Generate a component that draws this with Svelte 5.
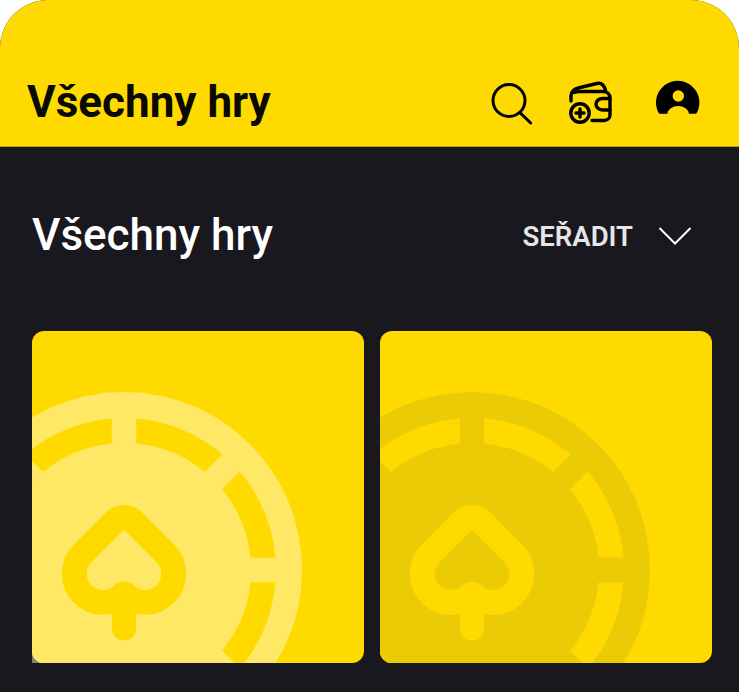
<script lang="ts">
  // the same chip artwork sits on both tiles, only the tint changes
  const tiles = [{ tint: 'light' }, { tint: 'dark' }];
  const cx = 92;
  const cy = 239;
  // gaps in the chip's ring, every 45 degrees
  const gaps = [0, 45, 90, 135];
</script>

<div class="page">
  <header class="topbar">
    <h1 class="brand-title">Všechny hry</h1>
    <div class="actions">
      <svg class="icon search" viewBox="0 0 44 48" aria-label="Hledat">
        <circle cx="20" cy="22.5" r="16" fill="none" stroke="#000" stroke-width="3" />
        <path d="M31 34.7 41.7 45" fill="none" stroke="#000" stroke-width="3" stroke-linecap="round" />
      </svg>
      <svg class="icon wallet" viewBox="0 0 44 48" aria-label="Peněženka">
        <g fill="none" stroke="#000" stroke-width="3.4" stroke-linecap="round" stroke-linejoin="round">
          <path d="M3 23V18C3 13 7 10.5 12 9.5L29 5.5C33 4.5 36 7 37.5 12" />
          <path d="M6 14.5C8 13.5 9 13.5 12 13.5H35C39 13.5 42 16 42 20V37C42 40.5 39 42.5 36 42.5H24" />
          <path d="M42 20.5H34.5C31 20.5 28 23 28 26.2S31 32 34.5 32H42" />
          <circle cx="12" cy="35" r="9.2" />
          <path d="M12 31V39M8 35H16" />
        </g>
      </svg>
      <svg class="icon avatar" viewBox="0 0 44 48" aria-label="Účet">
        <path
          fill="#000"
          fill-rule="evenodd"
          d="M3.5 35.7C3.2 35.7 3 35.5 2.8 35.2A21.7 21.7 0 1 1 40.6 35.2C40.4 35.5 40.2 35.7 40 35.7H33A10.9 8.4 0 0 0 11.3 35.7ZM22.3 12.3A5.7 5.7 0 1 0 22.3 23.7A5.7 5.7 0 1 0 22.3 12.3Z"
        />
      </svg>
    </div>
  </header>

  <section class="games">
    <div class="section-head">
      <h2>Všechny hry</h2>
      <button class="sort">
        <span>SEŘADIT</span>
        <svg viewBox="0 0 34 20" width="34" height="20">
          <path d="M1.5 2 17 17.5 32.5 2" fill="none" stroke="#fff" stroke-width="2" />
        </svg>
      </button>
    </div>

    <div class="grid">
      {#each tiles as tile}
        <div class="tile" class:corner={tile.tint === 'light'}>
          <svg class="chip {tile.tint}" viewBox="0 0 332 332">
            <circle {cx} {cy} r="178" class="tint-fill" />
            <circle {cx} {cy} r="139.5" fill="none" class="base-stroke" stroke-width="25" />
            {#each gaps as angle}
              <line
                x1={cx - 165}
                y1={cy}
                x2={cx + 165}
                y2={cy}
                class="tint-stroke"
                stroke-width="24.5"
                transform="rotate({angle} {cx} {cy})"
              />
            {/each}
            <circle {cx} {cy} r="127" class="tint-fill" />
            <path
              class="base-stroke tint-inner"
              stroke-width="25"
              stroke-linejoin="round"
              d="M82.6 190.4A13.3 13.3 0 0 1 101.4 190.4L133.3 222.4A28.7 28.7 0 0 1 92.7 263H91.3A28.7 28.7 0 0 1 50.7 222.4Z"
            />
            <path d="M92 270V297.5" fill="none" class="base-stroke" stroke-width="24" stroke-linecap="round" />
          </svg>
        </div>
      {/each}
    </div>
  </section>
</div>

<style>
  :global(body) {
    background: #fff;
  }

  .page {
    height: 692px;
    overflow: hidden;
    background: #18181e;
    border-radius: 48px 48px 0 0;
    font-family: Roboto, sans-serif;
  }

  .topbar {
    box-sizing: border-box;
    height: 147px;
    padding: 78px 39px 0 27px;
    display: flex;
    justify-content: space-between;
    background: #ffda00;
    border-bottom: 1px solid #b89e08;
  }

  .brand-title {
    margin: 0;
    font-size: 44px;
    line-height: 48px;
    font-weight: 700;
    color: #0a0a05;
  }

  .actions {
    display: flex;
    gap: 35px;
  }

  .icon {
    width: 44px;
    height: 48px;
  }

  .avatar {
    margin-left: 9px;
  }

  .section-head {
    padding: 64px 47px 0 32px;
    display: flex;
    justify-content: space-between;
    align-items: center;
  }

  h2 {
    margin: 0;
    font-size: 44px;
    line-height: 48px;
    font-weight: 500;
    color: #fff;
  }

  .sort {
    display: flex;
    align-items: center;
    gap: 25px;
    margin-top: 2px;
    padding: 0;
    border: 0;
    background: none;
    font-family: inherit;
    font-size: 27.5px;
    font-weight: 600;
    color: #e6e6e6;
  }

  .grid {
    margin-top: 72px;
    padding-left: 32px;
    display: grid;
    grid-template-columns: 332px 332px;
    gap: 16px;
  }

  .tile {
    position: relative;
    height: 332px;
  }

  /* grey sliver left behind the first tile's rounded corner */
  .tile.corner::before {
    content: '';
    position: absolute;
    left: 0;
    bottom: 0;
    width: 13px;
    height: 13px;
    background: #7f7f72;
  }

  .chip {
    position: relative;
    display: block;
    width: 332px;
    height: 332px;
    border-radius: 12px;
    background: #ffda00;
  }

  .tint-fill {
    fill: var(--tint);
  }

  .tint-stroke {
    stroke: var(--tint);
  }

  .base-stroke {
    stroke: #ffda00;
  }

  .tint-inner {
    fill: var(--tint);
  }

  .chip.light {
    --tint: #ffe866;
  }

  .chip.dark {
    --tint: #ebcb05;
  }
</style>
